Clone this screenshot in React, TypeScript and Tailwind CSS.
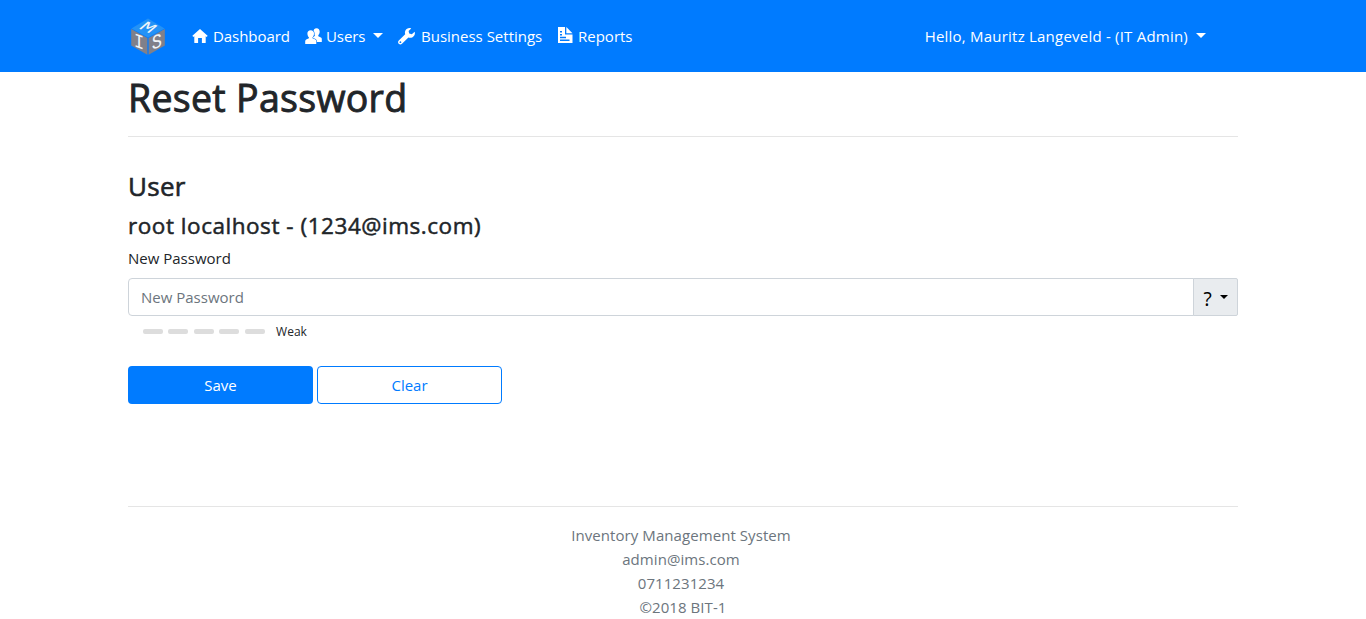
import React from 'react';

function Logo() {
  return (
    <svg width="36" height="38" viewBox="0 0 36 38" className="shrink-0">
      <polygon points="18,1.500 34.600,11.500 18,20.500 1.400,11.500" fill="#2492f5" />
      <polygon points="1.200,12 17.400,21 17.400,37.800 1.200,28.500" fill="#80808a" />
      <polygon points="18.600,21 34.800,12 34.800,28.500 18.600,37.800" fill="#80808a" />
      <g fill="#f1f5f9" fontFamily="Liberation Mono, monospace" textAnchor="middle">
        <text transform="matrix(0.85 0.3 0 1 9 31)" fontSize="20">I</text>
        <text transform="matrix(0.85 -0.3 0 1 26.8 31)" fontSize="20">S</text>
        <text transform="matrix(1 0.45 -0.65 0.55 14 14)" fontSize="20">M</text>
      </g>
    </svg>
  );
}

function HomeIcon() {
  return (
    <svg width="16" height="16" viewBox="0 0 16 16" fill="currentColor" className="shrink-0">
      <path d="M8 1 .4 7.8 1.2 9 2.3 8.3V14.5a.5.5 0 0 0 .5.5H6.1V10H9.9V15H13.2a.5.5 0 0 0 .5-.5V8.3L14.8 9 15.6 7.8Z" />
    </svg>
  );
}

function UsersIcon() {
  return (
    <svg width="17" height="17" viewBox="0 0 17 17" fill="currentColor" className="shrink-0">
      <path d="M11.600 0.200C9.500.2 8.300 1.700 8.400 3.800c.1 1.500.6 2.600 1.400 3.300v1L8 9V14H16.800V11Q16.800 9.800 15.900 9.400L13.300 8.200V7.100c.8-.7 1.300-1.900 1.400-3.300C14.800 1.700 13.500.2 11.600.2Z" />
      <path
        stroke="#007bff"
        strokeWidth="1.2"
        paintOrder="stroke"
        d="M5.700 2.200C3.600 2.200 2.300 3.600 2.400 5.700c.1 1.600.6 2.800 1.500 3.500v1L1.200 11.500Q.2 12 .2 13.200V16H11.300V13.200Q11.300 12 10.300 11.500L7.500 10.200v-1c.9-.7 1.400-1.900 1.500-3.500C9.100 3.600 7.800 2.200 5.700 2.200Z"
      />
    </svg>
  );
}

function WrenchIcon() {
  return (
    <svg width="17" height="17" viewBox="0 0 17 17" fill="currentColor" className="shrink-0">
      <path
        fillRule="evenodd"
        d="M13.200.4C11-.4 8.300.4 7.300 2.700c-.5 1.200-.5 2.300-.1 3.500L.8 12.500c-1 1-.9 2.400 0 3.300s2.300.9 3.200 0l6.400-6.300c2.300.8 4.900-.1 6-2.300.6-1.200.6-2.400.3-3.400L13.800 6.200 11.200 5.600 10.600 3.100ZM2.400 13.300a.9.9 0 1 1 0 1.800a.9.9 0 0 1 0-1.800Z"
      />
    </svg>
  );
}

function ReportIcon() {
  return (
    <svg width="15" height="16" viewBox="0 0 15 16" fill="currentColor" className="mb-[2px] shrink-0">
      <path
        fillRule="evenodd"
        d="M0 0H7V7.500H14.500V16H0ZM2 4V5.400H4V4ZM2 7V8.400H4V7ZM2 9.800V11.200H8V9.800ZM2 12.600V14H11.500V12.600Z"
      />
      <path d="M8.300 0 14.500 6.200H8.300Z" />
    </svg>
  );
}

function Caret() {
  return (
    <span className="mb-[2px] ml-[8px] inline-block h-0 w-0 shrink-0 border-x-[5px] border-t-[5px] border-x-transparent border-t-current" />
  );
}

function Navbar() {
  return (
    <nav className="flex h-[72px] justify-center bg-[#007bff] text-white">
      <div className="flex w-[1140px] items-center px-[17px]">
        <Logo />
        <a className="ml-[26px] flex items-center">
          <HomeIcon />
          <span className="ml-[5px] w-[77px] tracking-[-0.05px]">Dashboard</span>
        </a>
        <a className="ml-[15px] flex items-center">
          <UsersIcon />
          <span className="ml-[4px] w-[39px] tracking-[-0.1px]">Users</span>
          <Caret />
        </a>
        <a className="ml-[15px] flex items-center">
          <WrenchIcon />
          <span className="ml-[6px] w-[122px]">Business Settings</span>
        </a>
        <a className="ml-[15px] flex items-center">
          <ReportIcon />
          <span className="ml-[5px]">Reports</span>
        </a>
        <a className="mr-[30px] ml-auto flex items-center">
          <span className="tracking-[0.22px]">Hello, Mauritz Langeveld - (IT Admin)</span>
          <Caret />
        </a>
      </div>
    </nav>
  );
}

export default function App() {
  return (
    <div className="h-[619px] overflow-hidden bg-white font-['Open_Sans',sans-serif] text-[15px] leading-6 whitespace-nowrap text-[#212529]">
      <Navbar />
      <main className="mx-auto w-[1110px]">
        <h1 className="h-[56px] pt-[2px] text-[37.5px] leading-[48px] tracking-[0.3px] [-webkit-text-stroke:0.9px_#212529]">
          Reset Password
        </h1>
        <hr className="mt-2 border-[#e5e5e5]" />
        <h3 className="mt-[32px] text-[26px] leading-[34px] tracking-[0.3px] [-webkit-text-stroke:0.6px_#212529]">
          User
        </h3>
        <h4 className="mt-[8px] text-[22.5px] leading-[29px] tracking-[0.54px] [-webkit-text-stroke:0.5px_#212529]">
          root localhost - (1234@ims.com)
        </h4>
        <label className="mt-[6px] block">New Password</label>
        <div className="mt-[8px] flex h-[38px]">
          <input
            type="password"
            placeholder="New Password"
            className="min-w-0 flex-1 rounded-l border border-[#ced4da] px-3 placeholder:text-[#6c757d]"
          />
          <button className="-ml-px flex w-[45px] items-center justify-center gap-[8px] rounded-r-[2px] border border-[#ced4da] bg-[#e9ecef] text-black">
            <span className="pt-[3px] font-['Noto_Sans',sans-serif] text-[19px]">?</span>
            <span className="h-0 w-0 border-x-[4px] border-t-[4px] border-x-transparent border-t-black" />
          </button>
        </div>
        <div className="mt-[3px] flex h-6 items-center pl-[15px]">
          <div className="flex gap-[5.4px]">
            {[0, 1, 2, 3, 4].map((i) => (
              <span key={i} className="h-[5px] w-[20px] rounded-[2px] bg-[#ddd]" />
            ))}
          </div>
          <span className="ml-[11.5px] pt-[2px] text-[12px]">Weak</span>
        </div>
        <div className="mt-[23px] flex gap-1">
          <button className="h-[38px] w-[185px] rounded bg-[#007bff] text-white">Save</button>
          <button className="h-[38px] w-[185px] rounded border border-[#007bff] text-[#007bff]">Clear</button>
        </div>
        <footer className="mt-[102px] border-t border-[#e5e5e5] pt-[16px] text-center tracking-[0.07px] text-[#6c757d]">
          <p className="pr-[4px]">Inventory Management System</p>
          <p className="pr-[4px]">admin@ims.com</p>
          <p className="pr-[4px]">0711231234</p>
          <p>©2018 BIT-1</p>
        </footer>
      </main>
    </div>
  );
}
